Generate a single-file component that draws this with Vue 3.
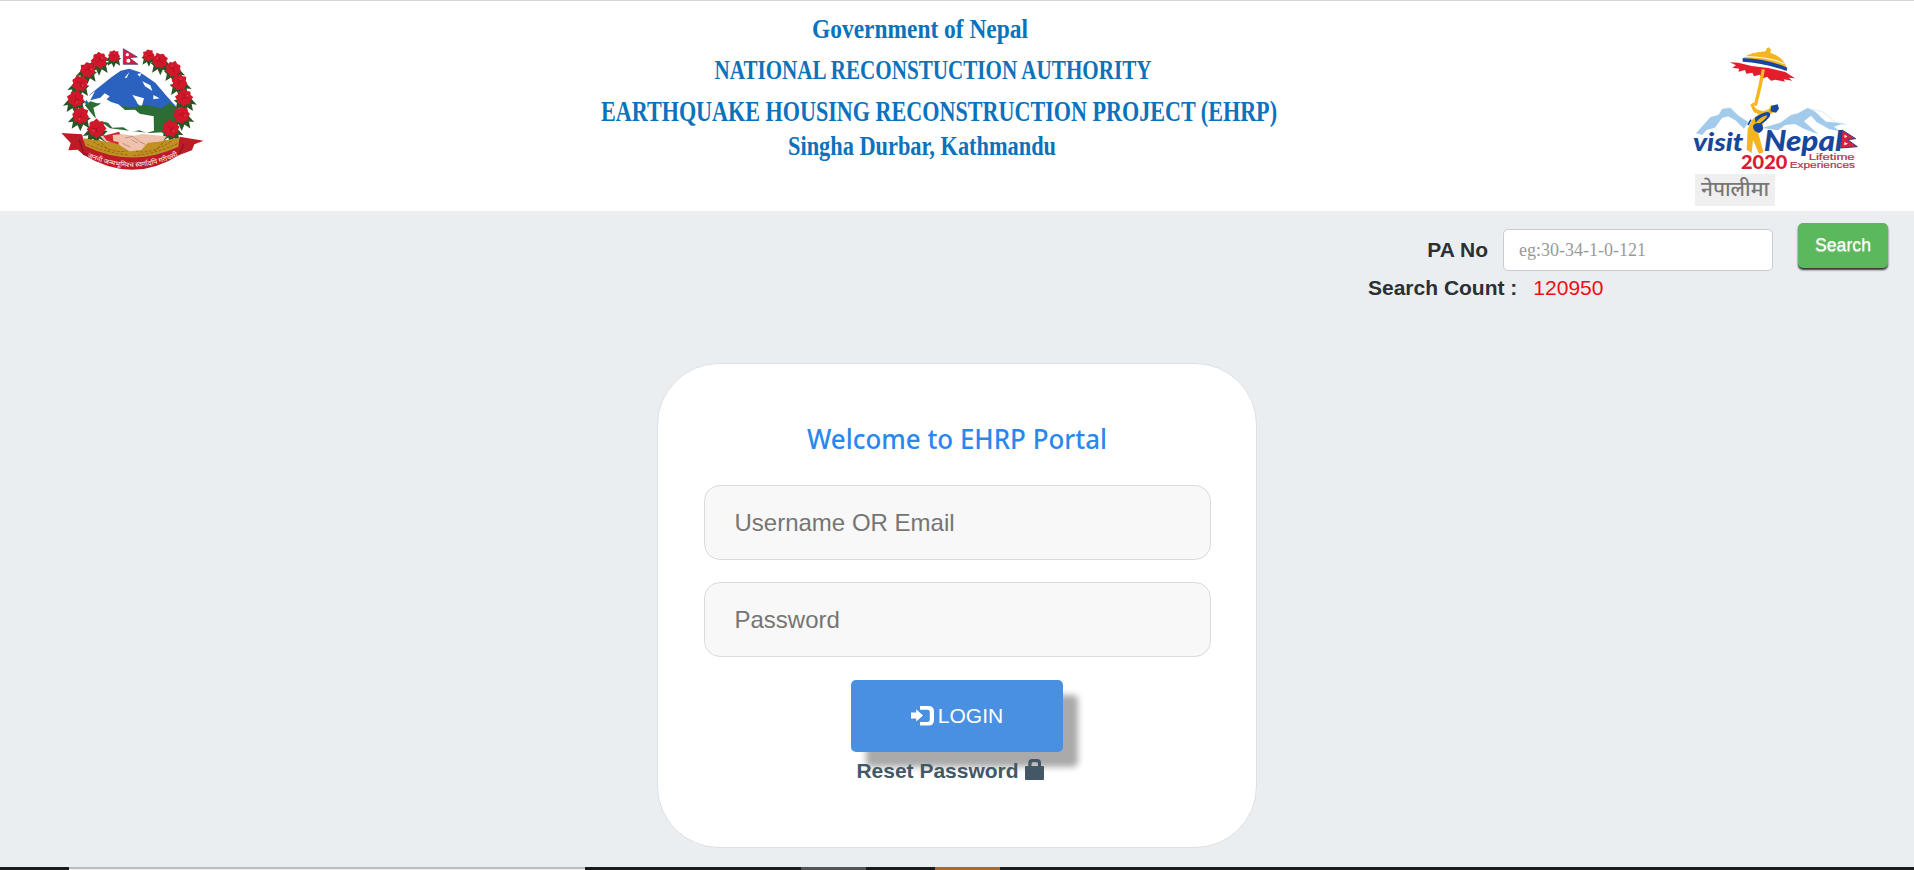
<script setup>
const flowers = [
  [192, 64, 17], [148, 76, 23], [113, 104, 22], [89, 145, 23], [77, 191, 24], [92, 241, 24], [140, 280, 26],
  [296, 61, 17], [330, 77, 22], [370, 102, 22], [388, 142, 23], [402, 188, 24], [394, 240, 24], [362, 280, 24],
].map(([x, y, r], i) => ({ x, y, s: r / 25, a: i * 37, left: i < 7 }))
</script>

<template>
  <div class="page">
    <header class="header">
      <svg class="emblem" viewBox="0 0 495 435" role="img" aria-label="Government of Nepal emblem">
        <defs>
          <path id="motto" d="M106 363 Q246 431 390 360" />
        </defs>
        <g v-for="(f, i) in flowers" :key="'l' + i" :transform="`translate(${f.x} ${f.y}) scale(${f.left ? f.s : -f.s} ${f.s})`">
          <path d="M-18 -2 L-40 22 L-24 20 L-28 42 L-10 30 L-1 50 L8 29 L27 41 L22 17 L32 8Z" fill="#2a5426" />
        </g>
        <path d="M103 205 L122 176 L185 126 L212 107 L238 101 L270 112 L316 143 L353 187 L383 220 L330 248 L220 242Z" fill="#2b62c0" />
        <path d="M107 191 L135 168 L121 196 L151 188 L164 175 L179 184 L161 202 L120 210Z M247 180 L282 190 L275 216 L263 206 L257 195Z M224 128 L238 111 L230 129Z M262 117 L275 114 L269 125Z M277 139 L301 151 L307 168 L285 154Z M310 180 L329 190 L310 193Z" fill="white" />
        <path d="M104 210 L122 199 L150 208 L173 194 L205 213 L250 216 L285 209 L335 220 L358 204 L382 218 L374 260 L350 291 L300 294 L238 287 L180 280 L133 246Z" fill="#2c6c35" />
        <path d="M130 218 L148 209 L164 189 L183 201 L205 208 L225 225 L255 224 L269 236 L311 244 L312 287 L290 294 L268 286 L242 291 L220 277 L187 278 L174 263 L139 255Z" fill="white" />
        <path d="M103 310 Q245 338 388 308 L400 333 Q329 378 246 379 Q160 377 94 336Z" fill="#c19022" />
        <g fill="none" stroke="#936712" stroke-width="3" stroke-dasharray="8 5">
          <path d="M112 328 Q168 353 236 360 M129 320 Q191 357 232 348 M382 326 Q323 355 251 362 M363 319 Q302 359 258 349" />
          <path d="M147 314 L178 350 M347 314 L312 352 M119 342 Q179 369 232 369" />
        </g>
        <path d="M151 304 L184 297 L214 297 L251 302 L278 297 L350 304 L339 318 L293 324 L274 345 L239 349 L214 334 L199 322 L163 317Z" fill="#efc2ad" />
        <path d="M226 309 L248 304 L269 320 L286 328 M218 325 L241 337 M262 324 L244 314" stroke="#c68f7c" stroke-width="3" fill="none" />
        <path d="M160 303 L207 290 L211 298 L188 300 L190 318 L207 322 L204 328 L171 318Z" fill="#d32632" />
        <path d="M34 294 L96 298 L106 333 Q244 401 385 335 L389 305 L461 317 L433 328 L426 346 L388 360 Q249 449 101 360 L83 344 L55 346 L62 324Z" fill="#bd1c27" />
        <path d="M88 314 L101 358 L123 356 M388 358 L402 326" fill="none" stroke="#851923" stroke-width="4" />
        <g v-for="(f, i) in flowers" :key="i" :transform="`translate(${f.x} ${f.y}) rotate(${f.a}) scale(${f.s})`">
          <path d="M-7 -22 Q0 -32 7 -21 L19 -22 L20 -8 Q32 0 21 9 L19 21 L6 20 Q-2 31 -9 21 L-22 18 L-20 5 Q-31 -4 -20 -11 L-19 -21Z" fill="#d0182a" />
          <path d="M-9 -8 L0 -2 L10 -8 M0 -2 L-3 10" fill="none" stroke="#a01022" stroke-width="2" />
          <circle cx="3" cy="-12" r="2.5" fill="#e54a57" />
        </g>
        <path d="M220 41 L262 66 L238 68 L264 88 L220 88Z" fill="#d81b3e" stroke="#34306c" stroke-width="2" />
        <circle cx="232" cy="59" r="5" fill="white" />
        <circle cx="235" cy="77" r="6" fill="white" />
        <text class="motto" text-anchor="middle"><textPath href="#motto" startOffset="50%">जननी जन्मभूमिश्च स्वर्गादपि गरीयसी</textPath></text>
      </svg>

      <svg class="titles" viewBox="0 0 720 210">
        <text x="232" y="38" font-size="28" textLength="216" lengthAdjust="spacingAndGlyphs">Government of Nepal</text>
        <text x="134.5" y="78.500" font-size="26.500" textLength="437" lengthAdjust="spacingAndGlyphs">NATIONAL RECONSTUCTION AUTHORITY</text>
        <text x="21" y="121" font-size="28.500" textLength="676" lengthAdjust="spacingAndGlyphs">EARTHQUAKE HOUSING RECONSTRUCTION PROJECT (EHRP)</text>
        <text x="208" y="155" font-size="27" textLength="268" lengthAdjust="spacingAndGlyphs">Singha Durbar, Kathmandu</text>
      </svg>

      <div class="visit">
        <svg class="visit-logo" viewBox="0 0 570 417" role="img" aria-label="Visit Nepal 2020">
          <path d="M48 295 L91 247 L116 239 L126 222 L151 219 L171 239 L205 261 L192 281 L166 256 L145 244 L126 249 L105 278 L79 285 L67 300Z" fill="#a1caeb" />
          <path d="M246 279 L301 263 L333 240 L354 235 L382 219 L404 229 L438 260 L492 265 L462 275 L480 289 L447 282 L410 261 L393 242 L372 259 L394 279 L416 298 L373 282 L345 267 L316 270 L294 286Z" fill="#a1caeb" />
          <path d="M382 219 L429 231 L466 262 L500 270 M130 220 L152 218 L178 244" fill="none" stroke="#cfdeea" stroke-width="2" />
          <path d="M150 82 L175 83 L215 93 L265 99 L316 111 L345 130 L326 128 L337 137 L311 133 L315 140 L286 134 L273 137 L261 125 L247 131 L239 119 L222 124 L217 113 L199 116 L195 105 L175 110 L178 101 L157 98 L168 91Z" fill="#e31e2c" />
          <path d="M190 69 Q207 53 257 49 L260 40 L267 37 L273 44 L271 53 Q314 67 321 104 Q274 82 190 69Z" fill="#f5b51e" />
          <path d="M188 69 Q263 72 322 98 L320 108 Q251 83 188 80Z" fill="#17479d" />
          <path d="M194 65 Q266 65 313 86" fill="none" stroke="white" stroke-width="3" />
          <path d="M250 103 L240 154 L226 212" fill="none" stroke="#f5b51e" stroke-width="10" />
          <path d="M222 202 Q220 220 234 224 L250 229 L267 222 L273 211 L291 217 L286 230 L269 238 L249 268 L235 294 L250 352 L237 356 L219 315 L215 354 L200 344 L203 282 L218 253 L236 238 L221 231 L211 209Z" fill="#f5b51e" />
          <path d="M274 212 L293 208 L297 221 L288 233 L271 229Z M224 248 Q246 233 263 231 Q275 233 269 245 Q257 260 245 266 Q257 283 238 294 Q218 289 219 273 Q225 262 239 265 Q259 252 262 241 Q243 244 227 263Z" fill="#17479d" />
          <path d="M213 254 L204 270" stroke="#17479d" stroke-width="5" />
          <text x="39" y="348" class="visit-word" font-size="73" textLength="151" lengthAdjust="spacingAndGlyphs">visit</text>
          <text x="251" y="349" class="visit-word" font-size="85" textLength="237" lengthAdjust="spacingAndGlyphs">Nepal</text>
          <path d="M486 285 L527 311 L503 314 L532 335 L482 339Z" fill="#db2135" stroke="#293e88" stroke-width="3" />
          <path d="M493 299 L502 304 L494 309 M493 321 L504 326 L493 331" fill="white" />
          <text x="183" y="402" class="year" textLength="139" lengthAdjust="spacingAndGlyphs">2020</text>
          <text x="386" y="374" class="tagline" textLength="138" lengthAdjust="spacingAndGlyphs">Lifetime</text>
          <text x="329" y="400" class="tagline" textLength="196" lengthAdjust="spacingAndGlyphs">Experiences</text>
        </svg>
        <button class="language">
          <svg viewBox="0 0 80 32"><text x="6" y="22" textLength="68" lengthAdjust="spacingAndGlyphs">नेपालीमा</text></svg>
        </button>
      </div>
    </header>

    <section class="search">
      <div class="search-fields">
        <div class="search-row">
          <label for="pa">PA No</label>
          <input id="pa" placeholder="eg:30-34-1-0-121" />
        </div>
        <div class="count"><b>Search Count :</b><span>120950</span></div>
      </div>
      <button class="search-button">Search</button>
    </section>

    <main class="card">
      <h1><svg viewBox="0 0 300 36"><text x="0" y="27" textLength="300" lengthAdjust="spacingAndGlyphs">Welcome to EHRP Portal</text></svg></h1>
      <input type="text" placeholder="Username OR Email" />
      <input type="password" placeholder="Password" />
      <button class="login">
        <svg viewBox="0 0 23 20"><path d="M0 6.500H5.200V3.200L12 9.500 5.200 15.500V12.500H0z M9 0H17.500Q23 0 23 5.500V14Q23 19.500 17.500 19.500H9V16H16Q18.800 16 18.800 13.500V6Q18.800 3.800 16 3.800H9z" fill="white" /></svg>
        <span>LOGIN</span>
      </button>
      <a class="reset"><span>Reset Password</span>
        <svg viewBox="0 0 19 21"><path d="M1 7H3.300V4Q3.300 0 7 0H12.300Q16 0 16 4V7H18Q19 7 19 8V20Q19 21 18 21H1Q0 21 0 20V8Q0 7 1 7z M6.500 7H13V5Q13 3 11.500 3H8Q6.500 3 6.500 5z" fill="#435866" fill-rule="evenodd" /></svg>
      </a>
    </main>

    <footer class="strip"><i class="dark first" /><i class="light" /><i class="dark second" /><i class="gray" /><i class="dark third" /><i class="orange" /><i class="dark rest" /></footer>
  </div>
</template>

<style>
html, body { overflow: hidden; }
</style>

<style scoped>
* { box-sizing: border-box; }
.page { height: 870px; background: #eaeef1; font-family: "Liberation Sans", Arial, sans-serif; display: flex; flex-direction: column; overflow: hidden; }
.header { height: 211px; flex: none; background: #fff; border-top: 1px solid #d6d6d6; display: flex; justify-content: space-between; padding: 0 44px 0 50px; }
.emblem { width: 165px; height: 145px; margin-top: 34px; }
.motto { font: 500 21px "Noto Sans", sans-serif; fill: #fbdcdc; }
.titles { width: 720px; height: 210px; margin: -1px 15px 0 0; overflow: visible; font-family: "Liberation Serif", "Times New Roman", serif; font-weight: bold; fill: #0b72bb; }
.visit { width: 190px; padding-top: 34px; display: flex; flex-direction: column; }
.visit-logo { width: 190px; height: 139px; display: block; }
.visit-word { font-family: Lato, sans-serif; font-style: italic; font-weight: 900; fill: #17479d; }
.year { font: 900 55px Lato, sans-serif; fill: #da1b34; }
.tagline { font: 25px "Liberation Sans", sans-serif; fill: #b7324b; stroke: #b7324b; stroke-width: .6px; }
.language { width: 80px; height: 32px; margin-left: 15px; padding: 0; border: 0; background: #efefef; }
.language svg { width: 80px; height: 32px; display: block; font: 500 20px "Noto Sans", sans-serif; fill: #777; }
.search { height: 152px; flex: none; display: flex; justify-content: flex-end; align-items: flex-start; padding: 12px 26px 0 0; color: #2b3035; }
.search-fields { width: 405px; margin-right: 25px; padding-top: 6px; }
.search-row { display: flex; justify-content: flex-end; align-items: center; gap: 15px; height: 42px; font-size: 21px; font-weight: bold; }
.search-row input { width: 270px; height: 42px; border: 1px solid #c9ccd0; border-radius: 5px; background: #fff; padding: 0 15px; font: 18px "Liberation Serif", serif; }
.search-row input::placeholder { color: #999; opacity: 1; }
.count { display: flex; gap: 16px; padding-top: 5px; font-size: 21px; line-height: 24px; }
.count span { color: #f30b16; }
.search-button { width: 90px; height: 45px; padding: 0; border: 0; border-radius: 5px; background: #5cb85c; box-shadow: 0 2px 2px #333; color: #fff; font: 17.7px "Liberation Sans", sans-serif; text-shadow: 0 1px 1px rgba(255, 255, 255, .6); }
.card { width: 600px; height: 485px; flex: none; align-self: center; background: #fff; border: 1px solid #dde1e4; border-radius: 62px; display: flex; flex-direction: column; align-items: center; padding-top: 58px; }
.card h1 { margin: 0 0 27px; width: 300px; height: 36px; }
.card h1 svg { display: block; width: 300px; height: 36px; font: 500 26.5px "Noto Sans", sans-serif; fill: #2888ed; overflow: visible; }
.card > input { width: 507px; height: 75px; flex: none; border: 1px solid #dbdbdc; border-radius: 16px; background: #f8f8f8; padding: 0 30px; font: 24px "Liberation Sans", Arial, sans-serif; margin-bottom: 22px; }
.card > input::placeholder { color: #757575; opacity: 1; }
.login { width: 212px; height: 72px; flex: none; margin-top: 1px; padding: 0; border: 0; border-radius: 5px; background: #4a90e2; box-shadow: 15px 15px 6px #aaa; color: #fff; font: 21px "Liberation Sans", sans-serif; display: flex; align-items: center; justify-content: center; gap: 4px; }
.login svg { width: 23px; height: 20px; margin-bottom: 1px; }
.reset { margin: 6px 14px 0 0; height: 26px; display: flex; align-items: center; gap: 6px; color: #435866; font-size: 21px; font-weight: bold; position: relative; }
.reset svg { width: 19px; height: 21px; margin-bottom: 3px; }
.strip { margin-top: auto; height: 3px; display: flex; }
.dark { background: #1c1b1c; }
.first { width: 69px; }
.light { width: 516px; background: #f0f0f0; border-top: 2px solid #bcbcbc; }
.second { width: 216px; }
.gray { width: 65px; background: #555; }
.third { width: 69px; }
.orange { width: 65px; background: #ac6829; }
.rest { flex: 1; }
</style>
